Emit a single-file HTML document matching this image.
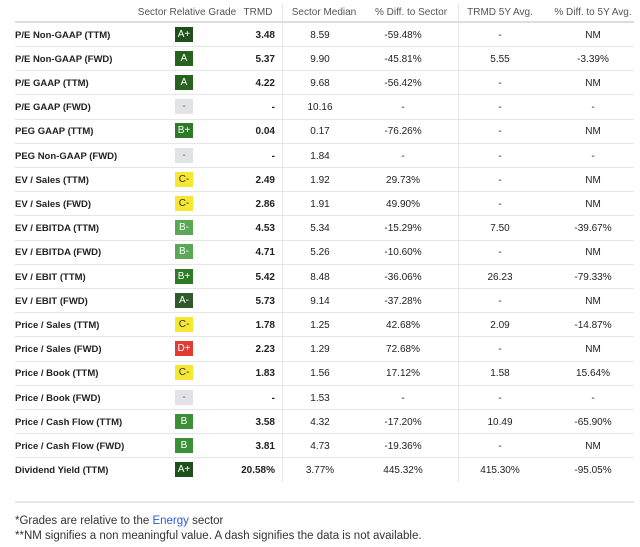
<!DOCTYPE html>
<html><head><meta charset="utf-8"><style>
body{margin:0;width:640px;height:547px;background:#fff;font-family:"Liberation Sans",Arial,sans-serif;position:relative;overflow:hidden;color:#222}
.a{position:absolute;font-size:10px;line-height:12px;white-space:nowrap}
.h{color:#555;top:7px}
.c{transform:translateX(-50%)}
.r{transform:translateX(-100%)}
.l{font-weight:bold;left:15px;color:#222;font-size:9.5px}
.b{font-weight:bold}
.g{position:absolute;left:175px;width:18px;height:15px;font-size:10px;line-height:15px;text-align:center;color:#fff}
.ln{position:absolute;left:15px;width:619px;height:1px;background:#e6e6e6}
.v{position:absolute;width:1px;background:#e6e6e6}
.f{position:absolute;left:15px;font-size:11.5px;color:#333}
</style></head><body>
<div class="a h c" style="left:187px">Sector Relative Grade</div>
<div class="a h c" style="left:258px">TRMD</div>
<div class="a h c" style="left:324px">Sector Median</div>
<div class="a h c" style="left:411px">% Diff. to Sector</div>
<div class="a h c" style="left:500px">TRMD 5Y Avg.</div>
<div class="a h c" style="left:593px">% Diff. to 5Y Avg.</div>
<div class="ln" style="top:21px;height:2px;background:#ddd"></div>
<div class="v" style="left:282px;top:4px;height:478px"></div>
<div class="v" style="left:458px;top:4px;height:478px"></div>
<div id="rows"></div>
<div class="ln" style="top:501px;height:2px;background:#e8e8e8"></div>
<div class="f" style="top:515px">*Grades are relative to the <span style="color:#2a5cd6">Energy</span> sector</div>
<div class="f" style="top:530px">**NM signifies a non meaningful value. A dash signifies the data is not available.</div>
<script>
var d=[["P/E Non-GAAP (TTM)","A+","3.48","8.59","-59.48%","-","NM"],
["P/E Non-GAAP (FWD)","A","5.37","9.90","-45.81%","5.55","-3.39%"],
["P/E GAAP (TTM)","A","4.22","9.68","-56.42%","-","NM"],
["P/E GAAP (FWD)","-","-","10.16","-","-","-"],
["PEG GAAP (TTM)","B+","0.04","0.17","-76.26%","-","NM"],
["PEG Non-GAAP (FWD)","-","-","1.84","-","-","-"],
["EV / Sales (TTM)","C-","2.49","1.92","29.73%","-","NM"],
["EV / Sales (FWD)","C-","2.86","1.91","49.90%","-","NM"],
["EV / EBITDA (TTM)","B-","4.53","5.34","-15.29%","7.50","-39.67%"],
["EV / EBITDA (FWD)","B-","4.71","5.26","-10.60%","-","NM"],
["EV / EBIT (TTM)","B+","5.42","8.48","-36.06%","26.23","-79.33%"],
["EV / EBIT (FWD)","A-","5.73","9.14","-37.28%","-","NM"],
["Price / Sales (TTM)","C-","1.78","1.25","42.68%","2.09","-14.87%"],
["Price / Sales (FWD)","D+","2.23","1.29","72.68%","-","NM"],
["Price / Book (TTM)","C-","1.83","1.56","17.12%","1.58","15.64%"],
["Price / Book (FWD)","-","-","1.53","-","-","-"],
["Price / Cash Flow (TTM)","B","3.58","4.32","-17.20%","10.49","-65.90%"],
["Price / Cash Flow (FWD)","B","3.81","4.73","-19.36%","-","NM"],
["Dividend Yield (TTM)","A+","20.58%","3.77%","445.32%","415.30%","-95.05%"]];
var col={"A+":"#1f4f1a","A":"#27621f","A-":"#2f5a2a","B+":"#2e7a27","B":"#3d8f36","B-":"#5aa855","C-":"#f6e733","D+":"#e03c36","-":"#e2e3e6"};
var h="";
d.forEach(function(r,i){var y=34+24.2*i;var t=y-4.5;
h+='<div class="a l" style="top:'+t+'px">'+r[0]+'</div>';
var fc=(r[1]=="C-")?"#333":(r[1]=="-"?"#666":"#fff");
h+='<div class="g" style="top:'+(y-7.5)+'px;background:'+col[r[1]]+';color:'+fc+'">'+r[1]+'</div>';
h+='<div class="a b r" style="left:275px;top:'+t+'px">'+r[2]+'</div>';
h+='<div class="a c" style="left:320px;top:'+t+'px">'+r[3]+'</div>';
h+='<div class="a c" style="left:403px;top:'+t+'px">'+r[4]+'</div>';
h+='<div class="a c" style="left:500px;top:'+t+'px">'+r[5]+'</div>';
h+='<div class="a c" style="left:593px;top:'+t+'px">'+r[6]+'</div>';
if(i<18)h+='<div class="ln" style="top:'+(y+12)+'px"></div>';});
document.getElementById("rows").innerHTML=h;
</script>
</body></html>
